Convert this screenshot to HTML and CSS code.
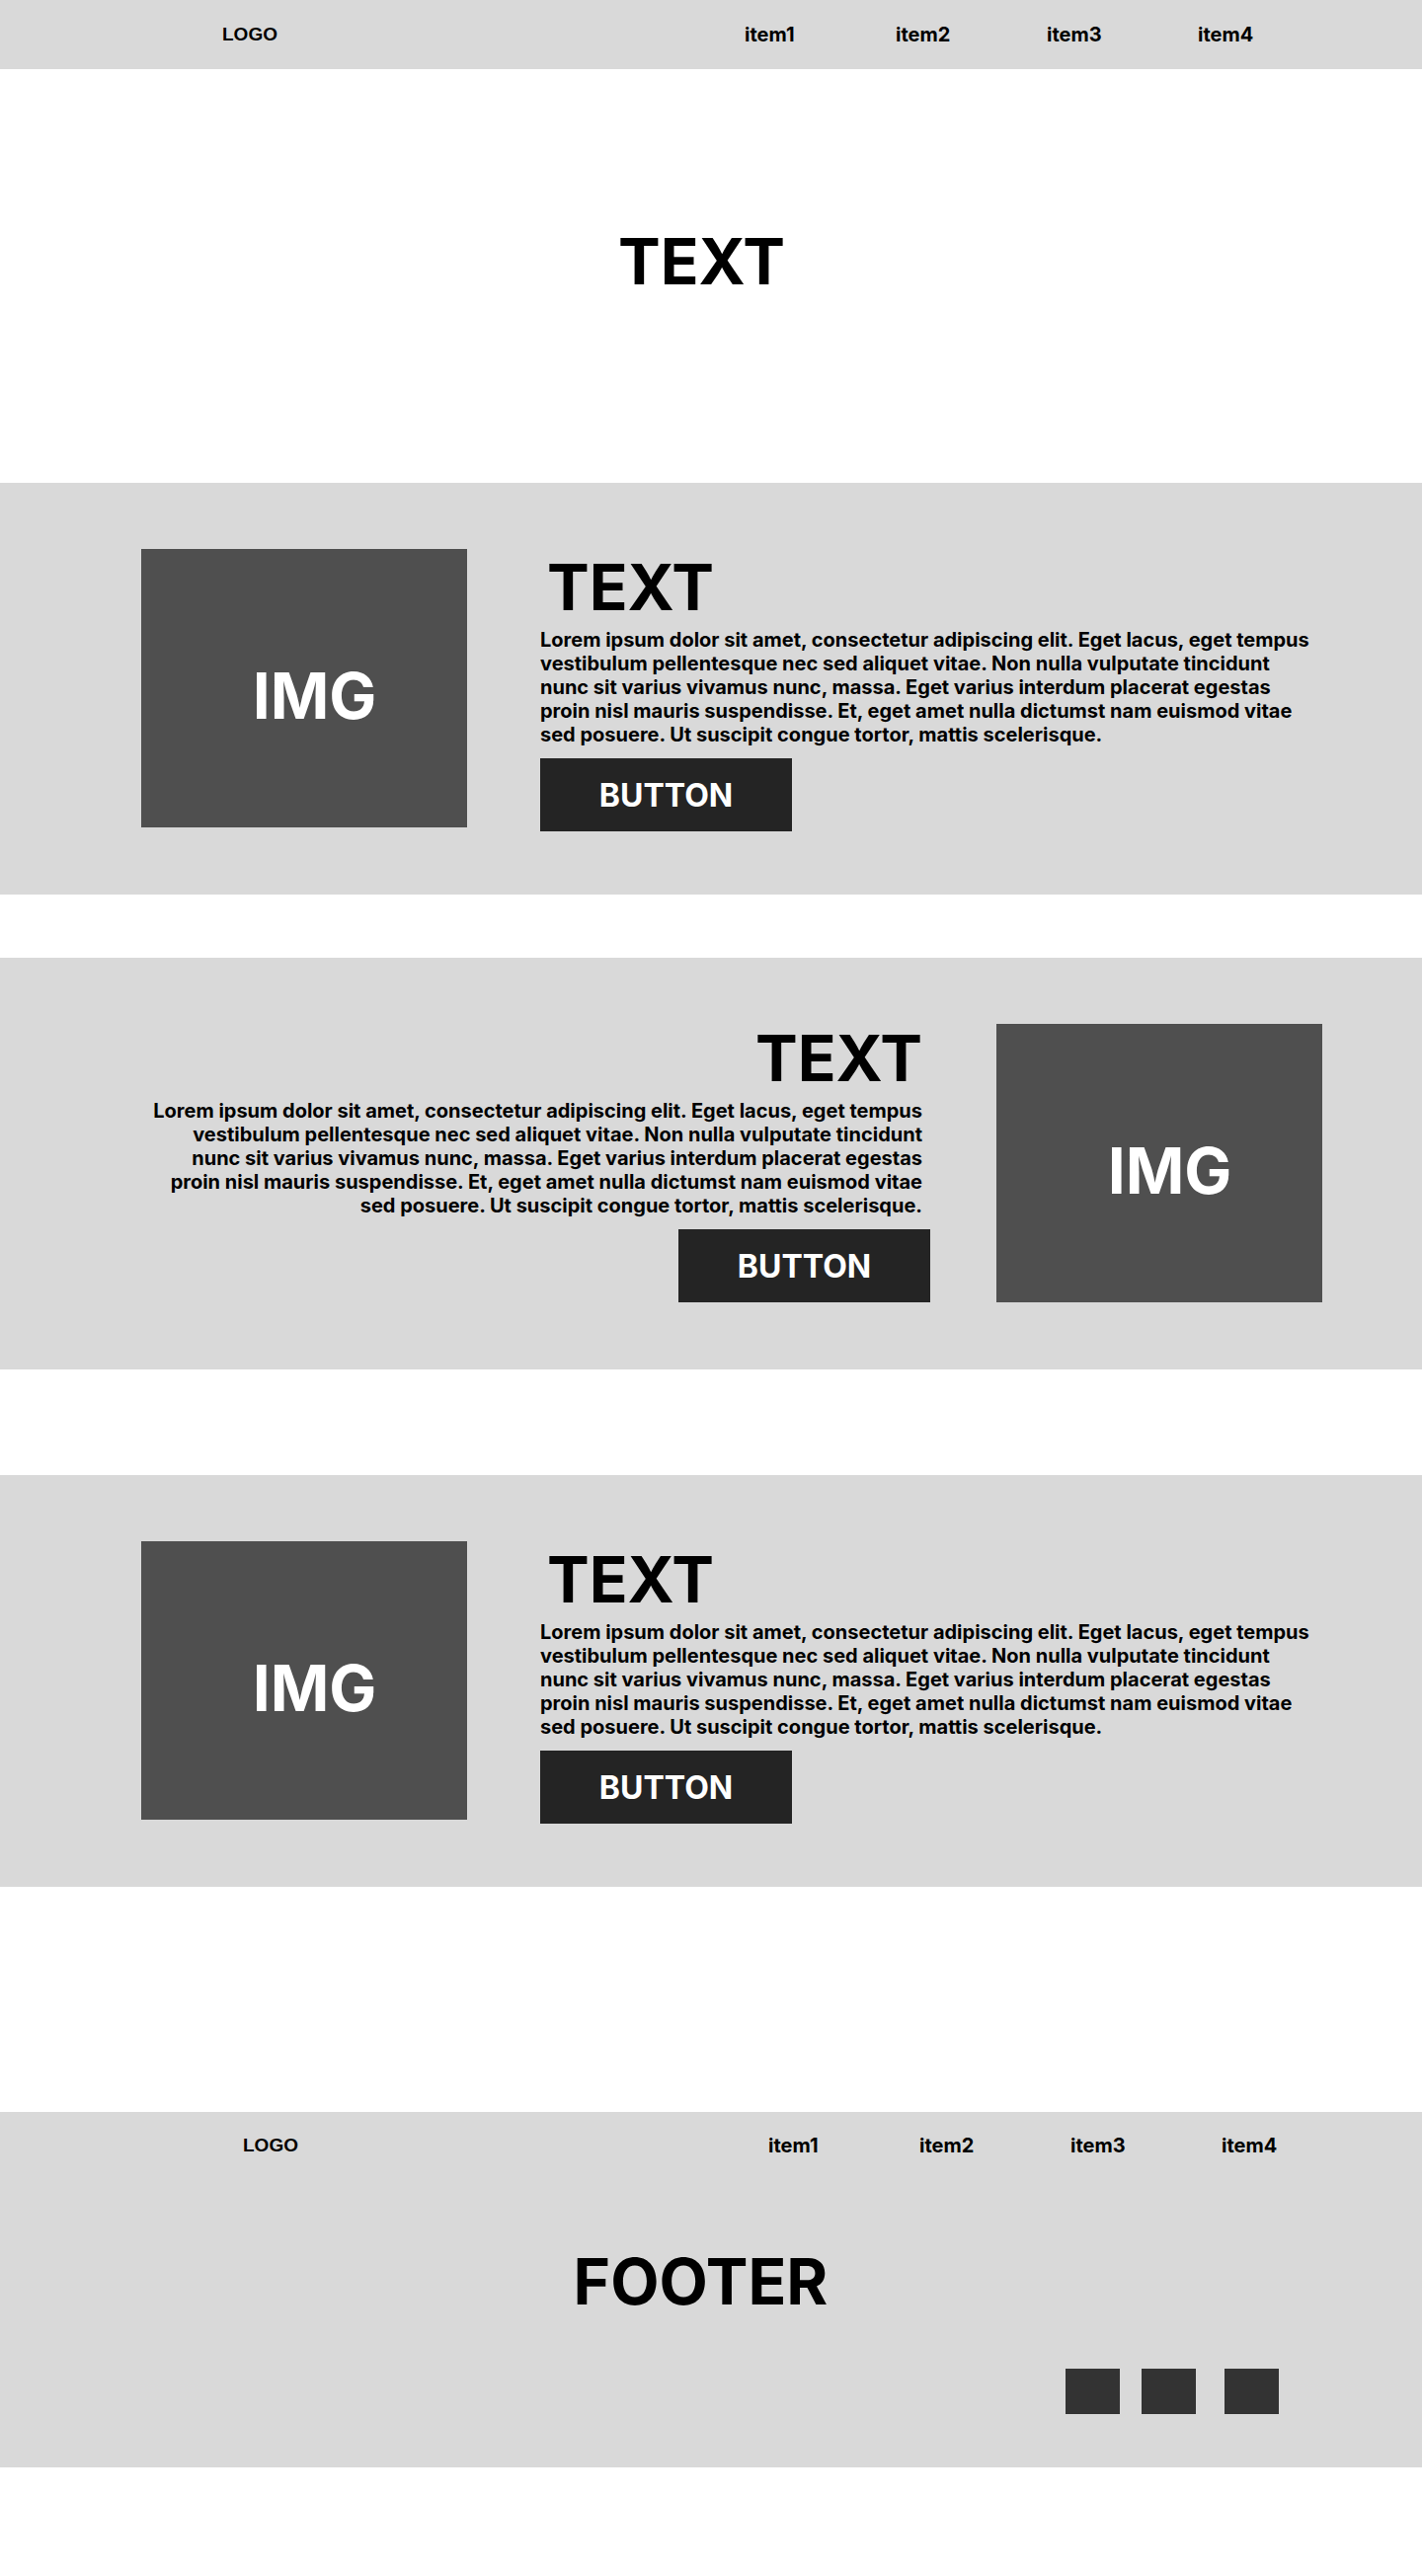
FILE: index.html
```html
<!DOCTYPE html>
<html lang="en">
<head>
<meta charset="utf-8">
<title>Wireframe</title>
<link rel="stylesheet" href="styles.css">
</head>
<body>
<header class="topbar">
  <div class="logo">LOGO</div>
  <nav class="nav">
    <a class="nav-item">item1</a>
    <a class="nav-item">item2</a>
    <a class="nav-item">item3</a>
    <a class="nav-item">item4</a>
  </nav>
</header>

<section class="hero">
  <h1 class="hero-title">TEXT</h1>
</section>

<section class="feature feature-left first">
  <div class="img-box">IMG</div>
  <div class="copy">
    <h2 class="copy-title">TEXT</h2>
    <p class="copy-text">Lorem ipsum dolor sit amet, consectetur adipiscing elit. Eget lacus, eget tempus<br>vestibulum pellentesque nec sed aliquet vitae. Non nulla vulputate tincidunt<br>nunc sit varius vivamus nunc, massa. Eget varius interdum placerat egestas<br>proin nisl mauris suspendisse. Et, eget amet nulla dictumst nam euismod vitae<br>sed posuere. Ut suscipit congue tortor, mattis scelerisque.</p>
    <div class="btn">BUTTON</div>
  </div>
</section>

<section class="feature feature-right second">
  <div class="copy copy-right">
    <h2 class="copy-title">TEXT</h2>
    <p class="copy-text">Lorem ipsum dolor sit amet, consectetur adipiscing elit. Eget lacus, eget tempus<br>vestibulum pellentesque nec sed aliquet vitae. Non nulla vulputate tincidunt<br>nunc sit varius vivamus nunc, massa. Eget varius interdum placerat egestas<br>proin nisl mauris suspendisse. Et, eget amet nulla dictumst nam euismod vitae<br>sed posuere. Ut suscipit congue tortor, mattis scelerisque.</p>
    <div class="btn">BUTTON</div>
  </div>
  <div class="img-box">IMG</div>
</section>

<section class="feature feature-left third">
  <div class="img-box">IMG</div>
  <div class="copy">
    <h2 class="copy-title">TEXT</h2>
    <p class="copy-text">Lorem ipsum dolor sit amet, consectetur adipiscing elit. Eget lacus, eget tempus<br>vestibulum pellentesque nec sed aliquet vitae. Non nulla vulputate tincidunt<br>nunc sit varius vivamus nunc, massa. Eget varius interdum placerat egestas<br>proin nisl mauris suspendisse. Et, eget amet nulla dictumst nam euismod vitae<br>sed posuere. Ut suscipit congue tortor, mattis scelerisque.</p>
    <div class="btn">BUTTON</div>
  </div>
</section>

<footer class="footer">
  <div class="footer-top">
    <div class="logo footer-logo">LOGO</div>
    <nav class="nav">
      <a class="nav-item">item1</a>
      <a class="nav-item">item2</a>
      <a class="nav-item">item3</a>
      <a class="nav-item">item4</a>
    </nav>
  </div>
  <h2 class="footer-title">FOOTER</h2>
  <div class="socials">
    <span class="sq"></span>
    <span class="sq"></span>
    <span class="sq sq-last"></span>
  </div>
</footer>
</body>
</html>
```

FILE: styles.css
```css
html, body {
  margin: 0;
  padding: 0;
  background: #ffffff;
}

body {
  min-height: 2609px;
  color: #000000;
  font-family: "Inter", "Liberation Sans", sans-serif;
}

/* Header */
.topbar {
  height: 70px;
  background: #d9d9d9;
  display: flex;
  align-items: center;
  padding-left: 225px;
}

.logo {
  width: 529px;
  font-family: "Liberation Sans", Arial, sans-serif;
  font-weight: 700;
  font-size: 19px;
}

.nav {
  display: grid;
  grid-template-columns: repeat(4, 153px);
}

.nav-item {
  font-family: "Inter", sans-serif;
  font-weight: 700;
  font-size: 20px;
  color: #000;
  text-decoration: none;
}

/* Hero */
.hero {
  height: 419px;
  box-sizing: border-box;
  padding-top: 156px;
  padding-right: 19px;
  text-align: center;
}

.hero-title {
  margin: 0;
  font-family: "Inter", sans-serif;
  font-weight: 700;
  font-size: 64px;
  line-height: normal;
}

/* Feature sections */
.feature {
  height: 417px;
  box-sizing: border-box;
  background: #d9d9d9;
  padding-top: 67px;
  display: flex;
  align-items: flex-start;
}

.second { margin-top: 64px; }
.third { margin-top: 107px; }

.feature-left {
  padding-left: 143px;
  gap: 74px;
}

.feature-right {
  justify-content: flex-end;
  padding-right: 101px;
  gap: 67px;
}

.img-box {
  width: 330px;
  height: 282px;
  flex: none;
  box-sizing: border-box;
  padding-left: 21px;
  padding-top: 15px;
  background: #4f4f4f;
  color: #ffffff;
  display: flex;
  align-items: center;
  justify-content: center;
  font-family: "Inter", sans-serif;
  font-weight: 700;
  font-size: 64px;
}

.copy {
  width: 800px;
  display: flex;
  flex-direction: column;
  align-items: flex-start;
}

.copy-right {
  align-items: flex-end;
  margin-top: -4px;
}

.copy-title {
  margin: 0 0 3px;
  padding-left: 7px;
  font-family: "Inter", sans-serif;
  font-weight: 700;
  font-size: 64px;
  line-height: normal;
}

.copy-right .copy-title {
  padding-left: 0;
  padding-right: 8px;
}

.copy-text {
  margin: 0 0 12px;
  font-family: "Inter", sans-serif;
  font-weight: 700;
  font-size: 20px;
  line-height: 24px;
  white-space: nowrap;
}

.copy-right .copy-text {
  text-align: right;
  padding-right: 8px;
}

.btn {
  width: 255px;
  height: 74px;
  background: #242424;
  color: #ffffff;
  display: flex;
  align-items: center;
  justify-content: center;
  font-family: "Inter", sans-serif;
  font-weight: 700;
  font-size: 32px;
}

/* Footer */
.footer {
  margin-top: 228px;
  height: 360px;
  box-sizing: border-box;
  background: #d9d9d9;
  display: flex;
  flex-direction: column;
}

.footer-top {
  height: 68px;
  display: flex;
  align-items: center;
  padding-left: 246px;
}

.footer-logo {
  width: 532px;
}

.footer-title {
  margin: 65px 0 0;
  padding-right: 21px;
  text-align: center;
  font-family: "Inter", sans-serif;
  font-weight: 700;
  font-size: 64px;
  line-height: normal;
}

.socials {
  display: flex;
  justify-content: flex-end;
  gap: 22px;
  padding-right: 145px;
  margin-top: 50px;
}

.sq {
  width: 55px;
  height: 46px;
  background: #333333;
}

.sq-last {
  margin-left: 7px;
}
```
